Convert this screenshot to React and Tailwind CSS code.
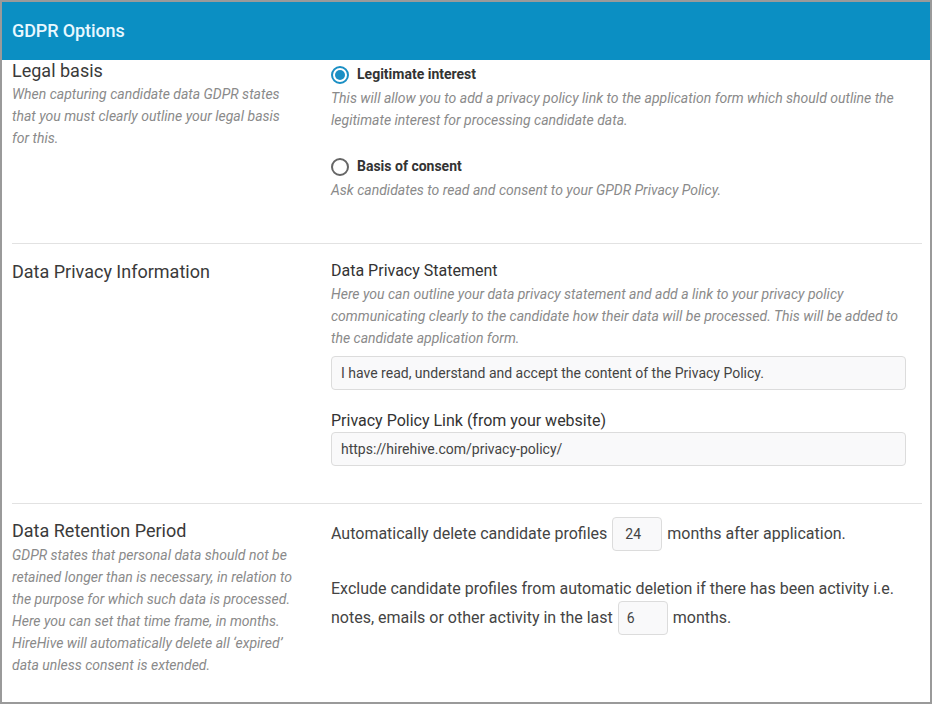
export default function App() {
  return (
    <div className="w-[932px] h-[704px] border-2 border-[#9a9a9a] bg-white overflow-hidden font-['Roboto',sans-serif] text-[#333]">
      <div className="h-[58px] bg-[#0b8fc3] flex items-center pl-[10px]">
        <h1 className="text-[18px] font-medium text-[#e8f8ff] tracking-[-0.1px] mt-[-2px]">GDPR Options</h1>
      </div>

      <div className="pl-[10px] pr-[8px]">
        {/* Legal basis */}
        <div className="flex border-b border-[#e2e2e2] pb-[42px]">
          <div className="w-[319px] shrink-0 pr-[24px]">
            <h2 className="text-[18px] leading-[24px] mt-[-1px] text-[#3a3a3a]">Legal basis</h2>
            <p className="text-[14px] leading-[22px] italic text-[#8a8a8a] pr-[8px]">
              When capturing candidate data GDPR states that you must clearly outline your legal basis for this.
            </p>
          </div>
          <div className="flex-1 pr-[16px] pt-[4px]">
            <label className="flex items-center gap-[8px]">
              <span className="w-[18px] h-[18px] rounded-full border-2 border-[#1a8fc4] flex items-center justify-center">
                <span className="w-[10px] h-[10px] rounded-full bg-[#1a8fc4]" />
              </span>
              <span className="text-[14px] font-bold text-[#333]">Legitimate interest</span>
            </label>
            <p className="text-[14px] leading-[22px] italic text-[#8a8a8a] mt-[2px]">
              This will allow you to add a privacy policy link to the application form which should outline the legitimate interest for processing candidate data.
            </p>
            <label className="flex items-center gap-[8px] mt-[25px]">
              <span className="w-[18px] h-[18px] rounded-full border-2 border-[#666]" />
              <span className="text-[14px] font-bold text-[#333]">Basis of consent</span>
            </label>
            <p className="text-[14px] leading-[22px] italic text-[#8a8a8a] mt-[2px]">
              Ask candidates to read and consent to your GPDR Privacy Policy.
            </p>
          </div>
        </div>

        {/* Data Privacy Information */}
        <div className="flex border-b border-[#e2e2e2] pt-[16px] pb-[37px]">
          <div className="w-[319px] shrink-0 pr-[24px]">
            <h2 className="text-[18px] leading-[24px] text-[#3a3a3a]">Data Privacy Information</h2>
          </div>
          <div className="flex-1 pr-[16px]">
            <h3 className="text-[16px] leading-[22px] text-[#333]">Data Privacy Statement</h3>
            <p className="text-[14px] leading-[22px] italic text-[#8a8a8a] mt-[1px]">
              Here you can outline your data privacy statement and add a link to your privacy policy communicating clearly to the candidate how their data will be processed. This will be added to the candidate application form.
            </p>
            <div className="mt-[7px] h-[34px] border border-[#dcdcdc] rounded-[4px] bg-[#f9f9fa] flex items-center px-[9px] text-[14px] text-[#444]">
              I have read, understand and accept the content of the Privacy Policy.
            </div>
            <h3 className="text-[16px] leading-[22px] text-[#333] mt-[20px]">Privacy Policy Link (from your website)</h3>
            <div className="mt-0 h-[34px] border border-[#dcdcdc] rounded-[4px] bg-[#f9f9fa] flex items-center px-[9px] text-[14px] text-[#444]">
              https://hirehive.com/privacy-policy/
            </div>
          </div>
        </div>

        {/* Data Retention Period */}
        <div className="flex pt-[15px]">
          <div className="w-[319px] shrink-0 pr-[24px]">
            <h2 className="text-[18px] leading-[24px] text-[#3a3a3a]">Data Retention Period</h2>
            <p className="text-[14px] leading-[22px] italic text-[#8a8a8a] pr-[4px] mt-[1px]">
              GDPR states that personal data should not be retained longer than is necessary, in relation to the purpose for which such data is processed. Here you can set that time frame, in months. HireHive will automatically delete all ‘expired’ data unless consent is extended.
            </p>
          </div>
          <div className="flex-1 pr-[16px] text-[16px] text-[#444]">
            <div className="flex items-center h-[34px] mt-[-2px]">
              <span>Automatically delete candidate profiles</span>
              <span className="mx-[5px] w-[50px] h-[34px] border border-[#dcdcdc] rounded-[4px] bg-[#f9f9fa] flex items-center px-[12px] text-[14px]">24</span>
              <span>months after application.</span>
            </div>
            <p className="mt-[23px] leading-[29px]">
              Exclude candidate profiles from automatic deletion if there has been activity i.e.
            </p>
            <div className="flex items-center h-[34px] mt-[-2px]">
              <span>notes, emails or other activity in the last</span>
              <span className="mx-[5px] w-[50px] h-[34px] border border-[#dcdcdc] rounded-[4px] bg-[#f9f9fa] flex items-center px-[8px] text-[14px]">6</span>
              <span>months.</span>
            </div>
          </div>
        </div>
      </div>
    </div>
  );
}
